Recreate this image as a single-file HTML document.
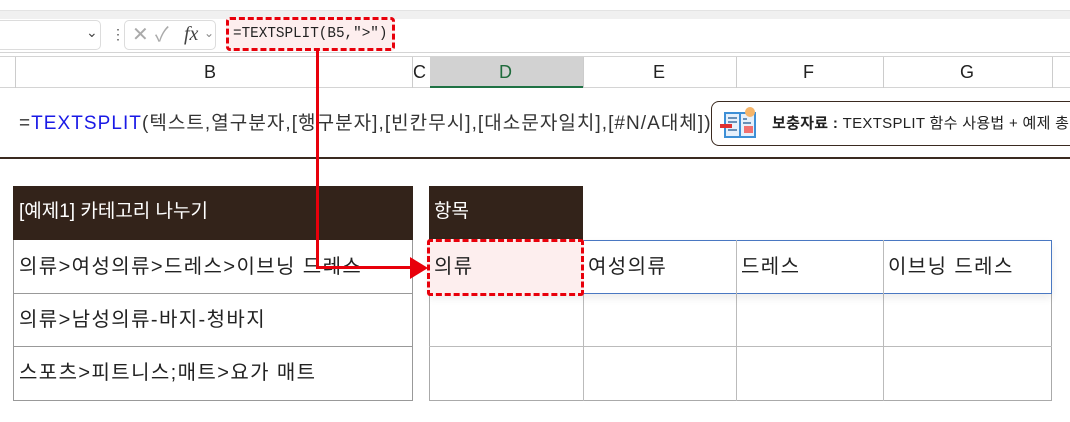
<!DOCTYPE html>
<html><head><meta charset="utf-8">
<style>
*{margin:0;padding:0;box-sizing:border-box}
body{width:1070px;height:422px;overflow:hidden;background:#fff;position:relative;font-family:"Liberation Sans","Noto Sans CJK KR",sans-serif;color:#222}
.a{position:absolute}
.t{font-size:19px;line-height:1;white-space:nowrap}
.k{font-size:20px;letter-spacing:1.4px}
</style></head><body>
<div class="a" style="left:0;top:0;width:1070px;height:11px;background:#fff;border-bottom:1px solid #e3e3e3"></div>
<div class="a" style="left:0;top:11px;width:1070px;height:8px;background:#f0f0f0"></div>
<div class="a" style="left:0;top:19px;width:1070px;height:34px;background:#fff;border-bottom:1px solid #d4d4d4"></div>
<div class="a" style="left:-5px;top:20px;width:106px;height:30px;border:1px solid #dcdcdc;border-radius:5px"></div>
<div class="a t" style="left:86px;top:25px;font-size:14px;color:#444">&#8964;</div>
<div class="a t" style="left:111px;top:27px;font-size:14px;color:#555">&#8942;</div>
<div class="a" style="left:124px;top:20px;width:92px;height:30px;border:1px solid #dcdcdc;border-radius:5px"></div>
<div class="a t" style="left:132px;top:25px;font-size:20px;color:#aaa">&#10005;</div>
<div class="a t" style="left:155px;top:25px;font-size:20px;color:#aaa">&#10003;</div>
<div class="a t" style="left:184px;top:24px;font-size:20px;font-style:italic;font-family:'Liberation Serif',serif;color:#444">fx</div>
<div class="a t" style="left:204px;top:27px;font-size:12px;color:#888">&#8964;</div>
<div class="a" style="left:226px;top:17px;width:169px;height:34px;background:#fdeeee;border:3px dashed #e8000b;border-radius:4px"></div>
<div class="a t" style="left:233px;top:27px;font-size:14.3px;font-family:'Liberation Mono',monospace;color:#222">=TEXTSPLIT(B5,"&gt;")</div>
<div class="a" style="left:0;top:56px;width:1070px;height:32px;background:#fff;border-top:1px solid #d4d4d4;border-bottom:1px solid #d4d4d4"></div>
<div class="a" style="left:430px;top:57px;width:153px;height:31px;background:#d2d2d2;border-bottom:2px solid #1f7244"></div>
<div class="a" style="left:15px;top:57px;width:1px;height:31px;background:#ccc"></div>
<div class="a" style="left:412px;top:57px;width:1px;height:31px;background:#ccc"></div>
<div class="a" style="left:583px;top:57px;width:1px;height:31px;background:#ccc"></div>
<div class="a" style="left:736px;top:57px;width:1px;height:31px;background:#ccc"></div>
<div class="a" style="left:883px;top:57px;width:1px;height:31px;background:#ccc"></div>
<div class="a" style="left:1052px;top:57px;width:1px;height:31px;background:#ccc"></div>
<div class="a t" style="left:204px;top:63px;font-size:18px">B</div>
<div class="a t" style="left:413px;top:63px;font-size:18px">C</div>
<div class="a t" style="left:499px;top:63px;font-size:18px;color:#1f6b3c">D</div>
<div class="a t" style="left:653px;top:63px;font-size:18px">E</div>
<div class="a t" style="left:803px;top:63px;font-size:18px">F</div>
<div class="a t" style="left:960px;top:63px;font-size:18px">G</div>
<div class="a t" style="left:19px;top:114px;font-size:19px;letter-spacing:1.05px;color:#333">=<span style="color:#1a1ae6">TEXTSPLIT</span>(텍스트,열구분자,[행구분자],[빈칸무시],[대소문자일치],[#N/A대체])</div>
<div class="a" style="left:711px;top:101px;width:380px;height:45px;border:1.5px solid #3a2a20;border-radius:8px;background:#fff"></div>
<svg class="a" style="left:718px;top:102px" width="48" height="38" viewBox="0 0 48 38">
<rect x="6" y="10" width="32" height="26" fill="#3d8fd6"/>
<rect x="8" y="12" width="13" height="22" fill="#e6f0fb"/>
<rect x="23" y="12" width="13" height="22" fill="#e6f0fb"/>
<g stroke="#3d6fa0" stroke-width="1.5"><line x1="10" y1="16" x2="19" y2="16"/><line x1="10" y1="20" x2="19" y2="20"/><line x1="10" y1="28" x2="19" y2="28"/><line x1="25" y1="17" x2="29" y2="17"/><line x1="25" y1="21" x2="33" y2="21"/></g>
<rect x="2" y="22" width="12" height="4" fill="#e03030"/>
<rect x="26" y="24" width="9" height="7" fill="#f07070"/>
<circle cx="32" cy="10" r="5" fill="#f5b56a"/>
</svg>
<div class="a t" style="left:772px;top:116px;font-size:15px;letter-spacing:0.3px;color:#222"><b>보충자료 :</b> TEXTSPLIT 함수 사용법 + 예제 총</div>
<div class="a" style="left:0;top:157px;width:1070px;height:2px;background:#3a2a20"></div>
<div class="a" style="left:13px;top:186px;width:400px;height:215px;border:1px solid #999"></div>
<div class="a" style="left:13px;top:186px;width:400px;height:54px;background:#33231a"></div>
<div class="a t" style="left:19px;top:202px;color:#fff">[예제1] 카테고리 나누기</div>
<div class="a" style="left:13px;top:293px;width:400px;height:1px;background:#999"></div>
<div class="a" style="left:13px;top:346px;width:400px;height:1px;background:#999"></div>
<div class="a t k" style="left:19px;top:257px">의류&gt;여성의류&gt;드레스&gt;이브닝 드레스</div>
<div class="a t k" style="left:19px;top:310px">의류&gt;남성의류-바지-청바지</div>
<div class="a t k" style="left:19px;top:363px">스포츠&gt;피트니스;매트&gt;요가 매트</div>
<div class="a" style="left:429px;top:186px;width:154px;height:54px;background:#33231a"></div>
<div class="a t" style="left:434px;top:202px;color:#fff">항목</div>
<div class="a" style="left:429px;top:240px;width:623px;height:161px;border:1px solid #aaa;border-top:none"></div>
<div class="a" style="left:429px;top:346px;width:623px;height:1px;background:#bbb"></div>
<div class="a" style="left:583px;top:240px;width:1px;height:161px;background:#bbb"></div>
<div class="a" style="left:736px;top:240px;width:1px;height:161px;background:#bbb"></div>
<div class="a" style="left:883px;top:240px;width:1px;height:161px;background:#bbb"></div>
<div class="a" style="left:429px;top:240px;width:623px;height:54px;border:1px solid #4a78c2;background:#fff;box-shadow:0 4px 8px rgba(0,0,0,.08)"></div>
<div class="a" style="left:583px;top:240px;width:1px;height:54px;background:#bbb"></div>
<div class="a" style="left:736px;top:240px;width:1px;height:54px;background:#bbb"></div>
<div class="a" style="left:883px;top:240px;width:1px;height:54px;background:#bbb"></div>
<div class="a" style="left:427px;top:239px;width:157px;height:57px;background:#fdeeee;border:3px dashed #e8000b;border-radius:3px"></div>
<div class="a t k" style="left:434px;top:257px">의류</div>
<div class="a t k" style="left:588px;top:257px">여성의류</div>
<div class="a t k" style="left:741px;top:257px">드레스</div>
<div class="a t k" style="left:888px;top:257px">이브닝 드레스</div>
<div class="a" style="left:316px;top:51px;width:3px;height:218px;background:#e8000b"></div>
<div class="a" style="left:316px;top:266px;width:96px;height:3px;background:#e8000b"></div>
<svg class="a" style="left:410px;top:257px" width="20" height="22"><polygon points="0,0 18,11 0,22" fill="#e8000b"/></svg>
</body></html>
